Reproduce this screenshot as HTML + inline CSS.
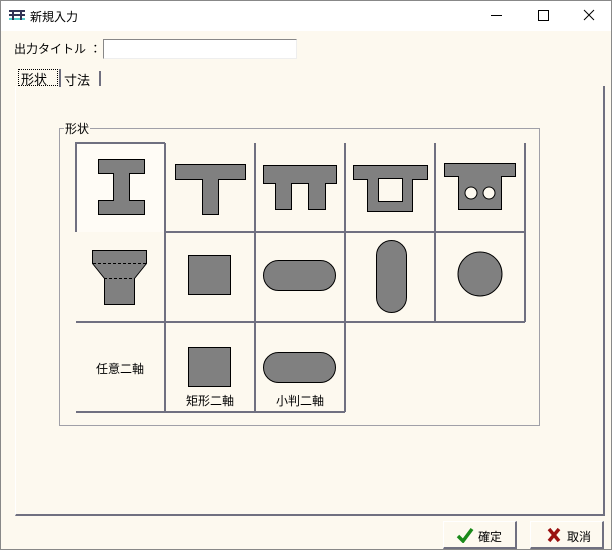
<!DOCTYPE html>
<html><head><meta charset="utf-8"><style>
*{margin:0;padding:0;box-sizing:border-box}
body{width:612px;height:550px;overflow:hidden;background:#fdf9ef;font-family:"Liberation Sans","Noto Sans CJK JP",sans-serif;font-size:12px;color:#000;position:relative}
.win{position:absolute;left:0;top:0;width:612px;height:550px;border:1px solid #888}
.tb{position:absolute;left:1px;top:1px;width:610px;height:30px;background:#fff}
.t{position:absolute;white-space:nowrap}
.btn{position:absolute;height:28px;background:#fdf9ef;border-top:1px solid #fff;border-left:1px solid #fff;border-right:2px solid #707080;border-bottom:2px solid #707080}
</style></head><body>
<div class="win"></div>
<div class="tb"></div>
<svg style="position:absolute;left:9px;top:10px" width="16" height="10"><rect x="0" y="0" width="16" height="2" fill="#335"/><rect x="0" y="4" width="16" height="2" fill="#335"/><rect x="0" y="8" width="16" height="2" fill="#5cc"/><rect x="3" y="0" width="2" height="10" fill="#335"/><rect x="11" y="0" width="2" height="10" fill="#335"/></svg>
<div class="t" style="left:30px;top:8px;font-size:12px">新規入力</div>
<svg style="position:absolute;left:490px;top:8px" width="110" height="16"><line x1="1" y1="7.5" x2="12" y2="7.5" stroke="#000"/><rect x="48.5" y="2.5" width="10" height="10" fill="none" stroke="#000"/><path d="M94 2 L104 12 M104 2 L94 12" stroke="#000"/></svg>
<div class="t" style="left:14px;top:40px">出力タイトル ：</div>
<div style="position:absolute;left:103px;top:39px;width:194px;height:20px;background:#fff;border-top:1px solid #888;border-left:1px solid #888;border-right:1px solid #eee;border-bottom:1px solid #eee"></div>
<!-- tab panel -->
<div style="position:absolute;left:15px;top:86px;width:590px;height:430px;border-left:1px solid #fff;border-right:2px solid #707080;border-bottom:2px solid #707080"></div>
<div style="position:absolute;left:18px;top:69px;width:40px;height:17px;border:1px dotted #000"></div>
<div class="t" style="left:21px;top:69px;font-size:13px">形状</div>
<div style="position:absolute;left:59px;top:69px;width:2px;height:18px;background:#707080"></div>
<div class="t" style="left:64px;top:70px;font-size:13px">寸法</div>
<div style="position:absolute;left:99px;top:71px;width:2px;height:15px;background:#707080"></div>
<!-- group -->
<div style="position:absolute;left:59px;top:128px;width:481px;height:298px;border:1px solid #a0a0a8"></div>
<div class="t" style="left:64px;top:120px;background:#fdf9ef;padding:0 1px">形状</div>
<svg style="position:absolute;left:0;top:0" width="612" height="550">
<g fill="#fdf9ef">
<rect x="76" y="143" width="89" height="89" fill="#fffcf6"/>
</g>
<g stroke="#707080" stroke-width="2" fill="none">
<path d="M76 232 V143 H165"/>
<path d="M165 143 V412 M255 143 V412 M345 143 V412 M435 143 V322 M525 143 V322"/>
<path d="M166 232 H525 M76 322 H525 M76 412 H345"/>
</g>
<g fill="#808080" stroke="#000" stroke-width="1">
<path d="M98.5 159.5 H144.5 V173.5 H129.5 V200.5 H144.5 V214.5 H98.5 V200.5 H113.5 V173.5 H98.5Z"/>
<path d="M175.5 164.5 H245.5 V179.5 H218.5 V214.5 H202.5 V179.5 H175.5Z"/>
<path d="M263.5 165.5 H336.5 V183.5 H325.5 V209.5 H308.5 V183.5 H291.5 V209.5 H275.5 V183.5 H263.5Z"/>
<path d="M353.5 165.5 H427.5 V179.5 H412.5 V211.5 H367.5 V179.5 H353.5Z M378.5 178.5 V201.5 H402.5 V178.5Z" fill-rule="evenodd"/>
<path d="M444.5 163.5 H515.5 V176.5 H501.5 V209.5 H458.5 V176.5 H444.5Z"/>
<circle cx="471" cy="193" r="6" fill="#fdf9ef"/><circle cx="489" cy="193" r="6" fill="#fdf9ef"/>
<path d="M92.5 250.5 H146.5 V263.5 L134.5 278.5 V304.5 H104.5 V278.5 L92.5 263.5Z"/>
<rect x="188.5" y="255.5" width="42" height="39"/>
<rect x="263.5" y="260.5" width="72" height="30" rx="15"/>
<rect x="376.5" y="240.5" width="30" height="72" rx="15"/>
<circle cx="480" cy="274" r="22"/>
<rect x="188.5" y="347.5" width="42" height="39"/>
<rect x="263.5" y="352.5" width="72" height="30" rx="15"/>
</g>
<path d="M93 263.5 H146 M104 278.5 H134" stroke="#000" stroke-dasharray="3,2"/>
</svg>
<div class="t" style="left:96px;top:360px">任意二軸</div>
<div class="t" style="left:186px;top:392px">矩形二軸</div>
<div class="t" style="left:276px;top:392px">小判二軸</div>
<div class="btn" style="left:443px;top:521px;width:74px"></div>
<svg style="position:absolute;left:456px;top:527px" width="18" height="16"><path d="M2 9 L7 14 L16 2" stroke="#1a8a1a" stroke-width="3.5" fill="none"/></svg>
<div class="t" style="left:478px;top:528px">確定</div>
<div class="btn" style="left:530px;top:521px;width:74px"></div>
<svg style="position:absolute;left:546px;top:527px" width="16" height="16"><path d="M3 2 L13 14 M13 2 L3 14" stroke="#9a1010" stroke-width="3.5"/></svg>
<div class="t" style="left:567px;top:528px">取消</div>
</body></html>
